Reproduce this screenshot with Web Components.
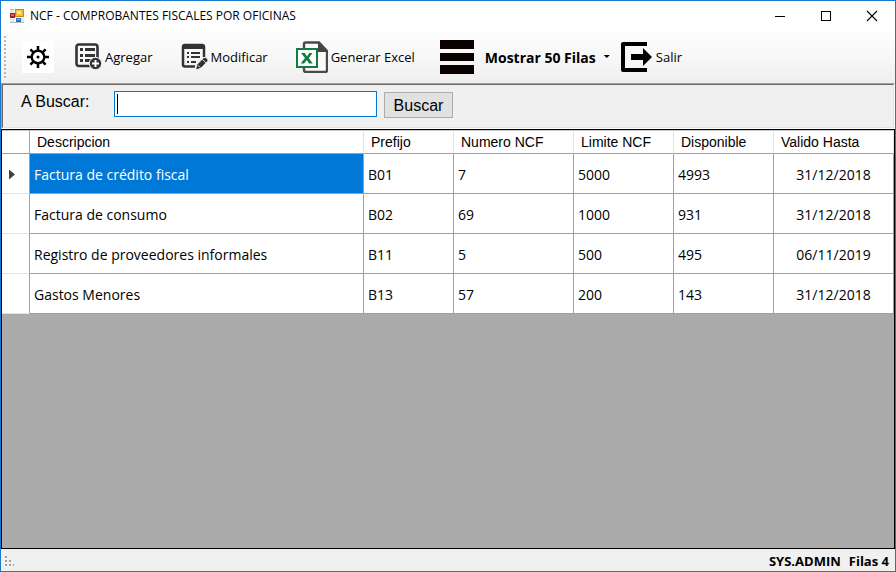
<!DOCTYPE html>
<html lang="es">
<head>
<meta charset="utf-8">
<title>NCF - COMPROBANTES FISCALES POR OFICINAS</title>
<style>
html, body { height: 100%; margin: 0; }
body { font-family: "Open Sans", "Noto Sans", sans-serif; color: #000; }
</style>
</head>
<body>
<ncf-window></ncf-window>
<script>
function define(name, html, init) {
  const template = document.createElement('template');
  template.innerHTML = html;
  customElements.define(name, class extends HTMLElement {
    constructor() {
      super();
      this.attachShadow({ mode: 'open' }).appendChild(template.content.cloneNode(true));
    }
    connectedCallback() { if (init) init(this, this.shadowRoot); }
  });
}

define('ncf-titlebar', `
<style>
:host { display: flex; align-items: center; height: 30px; background: #fff; font-size: 12px; }
.logo { margin: 0 6px 0 9px; flex: none; }
h1 { flex: 1; margin: 0; font: inherit; line-height: 16px; white-space: nowrap; }
button { width: 46px; height: 30px; padding: 0; border: 0; background: none; display: flex; align-items: center; justify-content: center; }
</style>
<svg class="logo" width="14" height="14" viewBox="0 0 14 14" shape-rendering="crispEdges">
  <path d="M0 0h4v4H0zM0 10h5v3H0zM11 9h3v4h-3z" fill="#e4e6ea"/>
  <path d="M0 0h4v1H0zM0 13h14v1H0z" fill="#b4bac5"/>
  <path d="M0 4h5v5H0z" fill="#9e2020"/><path d="M1 5h3v2H1z" fill="#d9665c"/>
  <path d="M5 0h9v8H5z" fill="#c98a12"/><path d="M6 1h7v6H6z" fill="#f5bf3c"/><path d="M7 2h4v3H7z" fill="#ffe798"/>
  <path d="M6 9h5v4H6z" fill="#2f6cc4"/><path d="M7 10h3v1H7z" fill="#8fbcf5"/>
</svg>
<h1><slot></slot></h1>
<button aria-label="Minimizar"><svg width="12" height="12" shape-rendering="crispEdges"><path d="M1 6h10v1H1z"/></svg></button>
<button aria-label="Maximizar"><svg width="12" height="12" shape-rendering="crispEdges"><path d="M1.5 1.5h9v9h-9z" fill="none" stroke="#000"/></svg></button>
<button aria-label="Cerrar"><svg width="12" height="12"><path d="M1 1l10 10M11 1L1 11" fill="none" stroke="#000" stroke-width="1.1"/></svg></button>
`);

const ICONS = {
  gear: [32, `<path fill="#fff" d="M0 0h32v32H0z"/><g transform="translate(16 16)"><circle r="6.3" fill="none" stroke="#000" stroke-width="2.4"/><circle r="1.5"/><g stroke="#000" stroke-width="2.5"><path d="M0-7V-11M0 7V11M-7 0H-11M7 0H11"/><path d="M-4.6-4.6L-7.6-7.6M4.6-4.6L7.6-7.6M-4.6 4.6L-7.6 7.6M4.6 4.6L7.6 7.6"/></g></g>`],
  add: [28, `<path d="M15 23H4Q1.500 23 1.500 20.500V4Q1.500 1.500 4 1.500H20Q22.500 1.500 22.500 4V15" fill="none" stroke="#333336" stroke-width="2.600"/><path fill="#333336" d="M5 5h3v3H5zM10 5h10v3H10zM5 11h3v3H5zM10 11h10v3H10zM5 16h3v3H5zM10 16h6v3H10z"/><circle cx="20.500" cy="20.500" r="6.200" fill="#333336" stroke="#f8f8f8"/><path d="M20.500 17V24M17 20.500H24" stroke="#fff" stroke-width="2"/>`],
  edit: [28, `<path d="M14 23.500H4Q2 23.500 2 21.500V4Q2 2 4 2H21Q23 2 23 4V14" fill="none" stroke="#333336" stroke-width="2.500"/><path fill="#333336" d="M2 2h21v4H2zM6 9h2v2H6zM10 9h9v2H10zM6 13h2v2H6zM10 13h9v2H10zM6 18h2v2H6zM10 18h5v2H10z"/><path d="M14.500 27L16 21.500 22.500 14.800Q24 13.500 25.600 15L26.500 16Q27.500 17.300 26.300 18.700L19.800 25.300z" fill="#333336" stroke="#f8f8f8" stroke-width=".8"/><path d="M21.300 16.300l3.700 3.700M17 22.200l2.500 2.500" stroke="#fff" stroke-width=".8"/>`],
  excel: [32, `<path d="M8 7V3Q8 1.500 9.500 1.500H23L31 10V29Q31 31 29 31H10Q8 31 8 29V26" fill="#fafafa" stroke="#4a4a48" stroke-width="2.400"/><path d="M22 1L32 11H22z" fill="#454544"/><path d="M1 8h20v18H1z" fill="#fff" stroke="#127c40" stroke-width="2"/><path d="M5 12h3.800l2.200 3.500 2.200-3.500h3.300l-3.700 5 4 5.500h-3.800L10.800 19 8.200 22.500h-3.500l4.300-5.500z" fill="#127c40"/>`],
  bars: [34, `<path fill="#090000" d="M0 0h34v9H0zM0 13h34v8H0zM0 25h34v9H0z"/>`],
  exit: [32, `<path d="M26 3H2V29H26" fill="none" stroke="#000" stroke-width="4" stroke-linejoin="round"/><path d="M10 13h12V7l9 9-9 9V19H10z" fill="#000"/>`]
};

define('ncf-tool', `
<style>
:host { display: block; }
button { display: flex; align-items: center; height: 34px; padding: 0; border: 0; background: none; font: inherit; color: inherit; white-space: nowrap; }
svg { flex: none; display: block; margin-right: var(--gap, 2px); }
.arrow { display: none; width: 6px; height: 3px; margin: 0 0 1px 8px; background: #000; clip-path: polygon(0 0, 100% 0, 50% 100%); }
:host([menu]) .arrow { display: block; }
</style>
<button><svg></svg><slot></slot><span class="arrow"></span></button>
`, (host, root) => {
  const [size, art] = ICONS[host.getAttribute('icon')];
  const svg = root.querySelector('svg');
  svg.setAttribute('width', size);
  svg.setAttribute('height', size);
  svg.setAttribute('viewBox', `0 0 ${size} ${size}`);
  svg.innerHTML = art;
  if (host.hasAttribute('label')) root.querySelector('button').setAttribute('aria-label', host.getAttribute('label'));
});

define('ncf-toolbar', `
<style>
:host { display: flex; align-items: center; height: 52px; padding-left: 3px; box-sizing: border-box; font-size: 13px; background: linear-gradient(#fdfdfd, #f7f7f7 50%, #efefef); }
.grip { width: 2px; height: 42px; margin-right: 16px; background: repeating-linear-gradient(#b8b8b8 0 2px, transparent 2px 4px); }
ncf-tool { --gap: 2px; }
.gear { --gap: 0px; }
.add { margin-left: 21px; }
.edit, .excel { margin-left: 28px; }
.excel { --gap: 3px; }
.rows { margin-left: 25px; font-size: 14px; font-weight: 700; --gap: 11px; }
.exit { margin-left: 11px; --gap: 3px; }
</style>
<span class="grip"></span>
<ncf-tool class="gear" icon="gear" label="Configurar"></ncf-tool>
<ncf-tool class="add" icon="add">Agregar</ncf-tool>
<ncf-tool class="edit" icon="edit">Modificar</ncf-tool>
<ncf-tool class="excel" icon="excel">Generar Excel</ncf-tool>
<ncf-tool class="rows" icon="bars" menu>Mostrar 50 Filas</ncf-tool>
<ncf-tool class="exit" icon="exit">Salir</ncf-tool>
`);

define('ncf-search', `
<style>
:host { display: block; border: 1px solid; border-color: #a0a0a0 #fff #fff #a0a0a0; background: #f0f0f0; font: 16px "Liberation Sans", Arial, sans-serif; }
form { display: flex; height: 36px; padding: 6px 0 0 18px; border: 1px solid; border-color: #696969 #e3e3e3 #e3e3e3 #696969; }
label { width: 93px; padding-top: 1px; line-height: 20px; white-space: nowrap; }
input { width: 263px; height: 26px; box-sizing: border-box; padding: 2px; border: 1px solid #0078d7; border-radius: 0; outline: 0; font: inherit; background: #fff; }
button { width: 69px; height: 26px; margin: 1px 0 0 7px; padding: 1px 0 0; border: 1px solid #adadad; background: #e1e1e1; font: inherit; color: #000; }
.box { position: relative; height: 26px; }
.caret { position: absolute; left: 3px; top: 3px; width: 1px; height: 20px; background: #000; }
</style>
<form onsubmit="return false">
  <label for="q">A Buscar:</label>
  <span class="box"><input id="q" type="text"><span class="caret"></span></span>
  <button type="submit">Buscar</button>
</form>
`);

const ROWS = [
  ['Factura de crédito fiscal', 'B01', '7', '5000', '4993', '31/12/2018'],
  ['Factura de consumo', 'B02', '69', '1000', '931', '31/12/2018'],
  ['Registro de proveedores informales', 'B11', '5', '500', '495', '06/11/2019'],
  ['Gastos Menores', 'B13', '57', '200', '143', '31/12/2018']
];

define('ncf-grid', `
<style>
:host { display: block; border: 1px solid #000; background: #ababab; }
table { width: 100%; table-layout: fixed; border-collapse: separate; border-spacing: 0; background: #fff; }
th, td { box-sizing: border-box; padding: 0 4px; text-align: left; font-weight: 400; white-space: nowrap; border: 0 solid #a0a0a0; border-width: 0 1px 1px 0; }
thead th { height: 24px; padding: 0 7px; font: 14px "Liberation Sans", Arial, sans-serif; border-right-color: #e3e3e3; border-top: 1px solid #c8c8c8; }
thead th:first-child { border-right-color: #a0a0a0; }
td, tbody th { height: 40px; padding-top: 2px; font-size: 14px; }
tbody th { border-bottom-color: #e3e3e3; }
td:last-child { text-align: center; }
.selected { background: #0078d7; color: #fff; }
.mark { display: block; width: 6px; height: 10px; margin-left: 3px; background: #404040; clip-path: polygon(0 0, 100% 50%, 0 100%); }
</style>
<table>
  <colgroup><col style="width:28px"><col><col style="width:90px"><col style="width:120px"><col style="width:100px"><col style="width:100px"><col style="width:120px"></colgroup>
  <thead><tr><th></th><th>Descripcion</th><th>Prefijo</th><th>Numero NCF</th><th>Limite NCF</th><th>Disponible</th><th>Valido Hasta</th></tr></thead>
  <tbody></tbody>
</table>
`, (host, root) => {
  root.querySelector('tbody').innerHTML = ROWS.map((row, i) =>
    `<tr><th>${i ? '' : '<span class="mark"></span>'}</th>` +
    row.map((text, j) => `<td${i || j ? '' : ' class="selected"'}>${text}</td>`).join('') + '</tr>').join('');
});

define('ncf-status', `
<style>
:host { display: flex; align-items: center; justify-content: flex-end; gap: 8px; height: 22px; padding: 2px 6px 0 2px; box-sizing: border-box; background: #f0f0f0; font-size: 13px; line-height: 18px; font-weight: 700; }
svg { margin-right: auto; }
</style>
<svg width="12" height="12" shape-rendering="crispEdges"><path fill="#fff" d="M2 2h2v2H2zM2 6h2v2H2zM6 6h2v2H6zM2 10h2v2H2zM6 10h2v2H6z"/><path fill="#a0a0a0" d="M2 1h2v2H2zM2 5h2v2H2zM6 5h2v2H6zM2 9h2v2H2zM6 9h2v2H6zM10 9h1v2h-1z"/></svg>
<slot></slot>
`);

define('ncf-window', `
<style>
:host { display: flex; flex-direction: column; height: 100%; box-sizing: border-box; border: 1px solid #1979ca; background: #f0f0f0; }
ncf-grid { flex: 1; }
</style>
<ncf-titlebar>NCF - COMPROBANTES FISCALES POR OFICINAS</ncf-titlebar>
<ncf-toolbar></ncf-toolbar>
<ncf-search></ncf-search>
<ncf-grid></ncf-grid>
<ncf-status><span>SYS.ADMIN</span><span>Filas 4</span></ncf-status>
`);
</script>
</body>
</html>
